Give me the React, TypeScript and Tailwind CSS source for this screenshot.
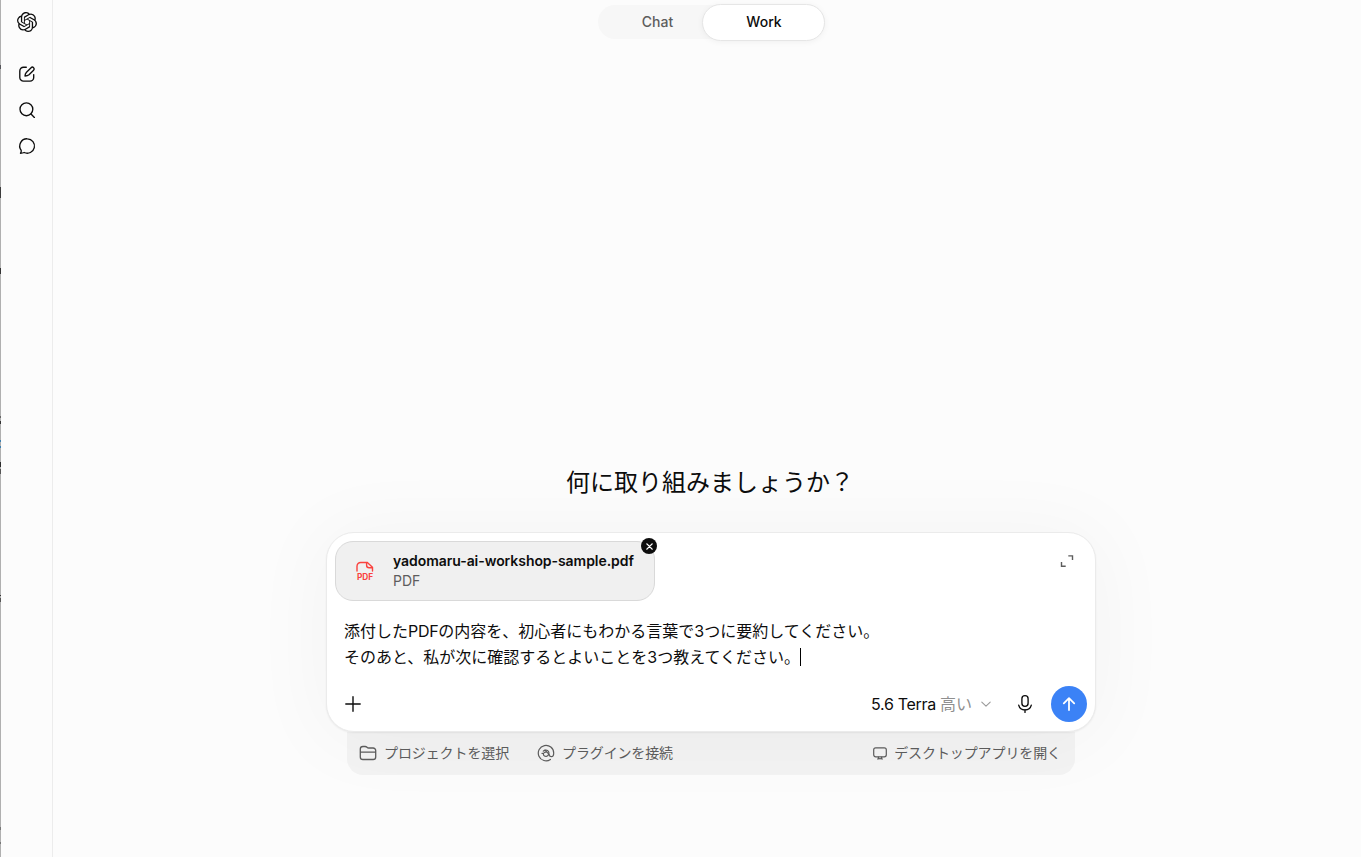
import type { ReactNode } from 'react'
import { SiOpenai } from 'react-icons/si'

type IconProps = { className?: string; children: ReactNode; box?: string; stroke?: number }

function Icon({ className, children, box = '0 0 20 20', stroke = 1.35 }: IconProps) {
  return (
    <svg
      viewBox={box}
      className={className}
      fill="none"
      stroke="currentColor"
      strokeWidth={stroke}
      strokeLinecap="round"
      strokeLinejoin="round"
    >
      {children}
    </svg>
  )
}

// slivers of the window behind, visible along the left edge
const slivers = [
  { top: 65, height: 4, color: '#55555a' },
  { top: 187, height: 11, color: '#3c3c3c' },
  { top: 268, height: 6, color: '#333333' },
  { top: 416, height: 2, color: '#666666' },
  { top: 421, height: 3, color: '#333333' },
  { top: 440, height: 2, color: '#3d7fae' },
  { top: 446, height: 2, color: '#3d7fae' },
  { top: 462, height: 5, color: '#2c2c2c' },
  { top: 469, height: 5, color: '#555555' },
  { top: 595, height: 1, color: '#333333' },
  { top: 598, height: 4, color: '#555555' },
  { top: 827, height: 3, color: '#777777' },
  { top: 842, height: 2, color: '#777777' },
]

function Sidebar() {
  return (
    <aside className="flex w-[53px] shrink-0 border-r border-[#ececec]">
      <div className="relative w-px shrink-0 bg-[#b0b0b0]">
        {slivers.map(s => (
          <span key={s.top} className="absolute left-0 w-px" style={{ top: s.top, height: s.height, background: s.color }} />
        ))}
      </div>
      <nav className="flex flex-1 flex-col items-center pt-3">
        <button className="size-5">
          <SiOpenai className="size-5" />
        </button>
        <button className="mt-8 size-5">
          <Icon className="size-5">
            <path d="M9.3 3.2H6.5A3.7 3.7 0 0 0 2.8 6.9v6.5a3.7 3.7 0 0 0 3.7 3.7H13a3.7 3.7 0 0 0 3.7-3.7v-2.8" />
            <path d="M8 12c0-1.8.5-2.7 1.5-3.7l4.6-4.6a1.75 1.75 0 0 1 2.5 2.5L12 10.7C11 11.6 9.9 12 8 12z" />
          </Icon>
        </button>
        <button className="mt-4 size-5">
          <Icon className="size-5">
            <circle cx="9.4" cy="9.3" r="6.4" />
            <path d="M14 14l3.4 3.4" />
          </Icon>
        </button>
        <button className="mt-4 size-5">
          <Icon className="size-5">
            <path d="M10.4 2.8a7.2 7.2 0 1 1-3.2 13.7c-1.2.5-2.4.7-3.7.7.6-.8.9-1.8.7-2.9A7.2 7.2 0 0 1 10.4 2.8z" />
          </Icon>
        </button>
      </nav>
    </aside>
  )
}

function ModeSwitch() {
  return (
    <div className="mt-1 flex h-[37px] w-[227px] items-center text-sm font-medium">
      <div className="-mt-px flex h-[34px] flex-1 items-center rounded-full bg-[#f7f7f7]">
        <button className="w-[104px] pl-4 text-center text-[#5d5d5d]">Chat</button>
        <button className="mt-px h-[37px] w-[123px] rounded-full border border-[#e6e6e6] bg-white pb-px pl-0.5 text-[#0d0d0d] shadow-[0_1px_6px_rgba(0,0,0,0.05)]">
          Work
        </button>
      </div>
    </div>
  )
}

function Attachment() {
  return (
    <div className="relative flex h-[60px] w-[320px] items-center rounded-[18px] border border-[#d9d9d9] bg-[#f0f0f0]">
      <svg viewBox="0 0 20 24" className="ml-[19px] h-6 w-5 text-[#fa423e]" fill="none" stroke="currentColor" strokeWidth="1.4">
        <path d="M2 12V7.2A3.7 3.7 0 0 1 5.7 3.5h6.6l5.2 4.8V12" strokeLinecap="round" />
        <path d="M11.6 3.6V6.2c0 1.6.9 2.5 2.5 2.5h3.3" />
        <text x="10" y="21" textAnchor="middle" fill="currentColor" stroke="none" className="font-['Inter'] text-[8.3px] font-bold">
          PDF
        </text>
      </svg>
      <div className="ml-[18px] text-sm leading-5">
        <p className="tracking-[-0.06px] text-[#0d0d0d] font-semibold">yadomaru-ai-workshop-sample.pdf</p>
        <p className="text-[#5d5d5d]">PDF</p>
      </div>
      <button className="absolute -top-[4px] -right-[3px] flex size-4 items-center justify-center rounded-full bg-[#0d0d0d] text-white">
        <Icon className="size-[7px]" box="0 0 8 8" stroke={1.6}>
          <path d="M1 1l6 6M7 1L1 7" />
        </Icon>
      </button>
    </div>
  )
}

function Composer() {
  return (
    <div className="relative flex h-[200px] w-[770px] flex-col rounded-[28px] border border-[#ebebeb] bg-white p-2 shadow-[0_4px_80px_8px_rgba(0,0,0,0.035),0_1px_2px_rgba(0,0,0,0.06)]">
      <div className="flex items-start justify-between">
        <Attachment />
        <button className="mt-3 mr-3 size-4 text-[#5d5d5d]">
          <svg viewBox="0 0 16 16" className="size-4" fill="none" stroke="currentColor" strokeWidth="1.4">
            <path d="M9.3 2.9h4.2v4.2M6.7 13.3H2.5V9.1" />
          </svg>
        </button>
      </div>
      <div className="mt-[17px] ml-[9px] text-base leading-[26px] whitespace-nowrap text-[#0d0d0d]">
        <p>
          添付した<span className="tracking-[-0.3px]">PDF</span>の内容を、初心者にもわかる言葉で3つに要約してください。
        </p>
        <p className="flex items-center">
          そのあと、私が次に確認するとよいことを3つ教えてください。
          <span className="h-[18px] w-px bg-black" />
        </p>
      </div>
      <div className="mt-4 flex h-9 items-center text-[#0d0d0d]">
        <button className="ml-2 size-5">
          <Icon className="size-5" stroke={1.4}>
            <path d="M10 2.8v14.4M2.8 10h14.4" />
          </Icon>
        </button>
        <button className="ml-auto flex items-center text-base">
          <span className="tracking-[-0.3px]">5.6 Terra</span>
          <span className="ml-1 text-[#8f8f8f]">高い</span>
          <Icon className="ml-2 size-3 text-[#9b9b9b]" box="0 0 12 12" stroke={1.1}>
            <path d="M1.8 4.2L6 8.2l4.2-4" />
          </Icon>
        </button>
        <button className="ml-[23px] size-5">
          <Icon className="size-5">
            <rect x="6.9" y="1.6" width="6.2" height="10.8" rx="3.1" />
            <path d="M3.7 11.1a6.5 6.5 0 0 0 12.6 0M10 15.6v2.8" />
          </Icon>
        </button>
        <button className="ml-4 flex size-9 items-center justify-center rounded-full bg-[#3b82f6] text-white">
          <Icon className="size-5" stroke={1.8}>
            <path d="M10 16V4.6M4.8 9.4L10 4.2l5.2 5.2" />
          </Icon>
        </button>
      </div>
    </div>
  )
}

function Tray() {
  return (
    <div className="flex h-[43px] w-[728px] items-center rounded-b-[16px] bg-[#f3f3f3] px-3 pb-px text-sm text-[#5d5d5d]">
      <button className="flex items-center">
        <Icon className="size-[18px]" box="0 0 18 18" stroke={1.3}>
          <path d="M1.3 5.1a2.6 2.6 0 0 1 2.6-2.6h2.2c.8 0 1.4.3 1.9.8.5.5.9.7 1.6.7h4.5a2.6 2.6 0 0 1 2.6 2.6v6.3a2.6 2.6 0 0 1-2.6 2.6H3.9a2.6 2.6 0 0 1-2.6-2.6zM1.3 8.1h15.4" />
        </Icon>
        <span className="ml-[7px] tracking-[-0.1px]">プロジェクトを選択</span>
      </button>
      <button className="ml-7 flex items-center">
        <Icon className="size-[18px]" box="0 0 18 18" stroke={1.2}>
          <path d="M13.4 15.4A7.7 7.7 0 1 1 16.7 9c0 2.3-.8 3.7-2.3 3.7-1.3 0-2-.8-2.2-2.1" />
          <path d="M6.3 7.2c1.5-1.7 4.2-1.5 5.2.3 1 1.8.2 4.1-1.7 4.7-1.7.5-3.4-.5-3.4-2 0-1.3 1.2-2.2 2.6-2" />
          <path d="M8 6.2l3.8 3.9M5 9.3l1.5.2" />
        </Icon>
        <span className="ml-[7px] tracking-[-0.15px]">プラグインを接続</span>
      </button>
      <button className="ml-auto mr-0.5 flex items-center">
        <Icon className="size-4" box="0 0 16 16" stroke={1.2}>
          <rect x="1.7" y="2.8" width="12.6" height="9" rx="2" />
          <path d="M5.6 14c1.5-.5 3.3-.5 4.8 0M6.4 12v1.6M9.6 12v1.6" />
        </Icon>
        <span className="ml-1.5 tracking-[-0.1px]">デスクトップアプリを開く</span>
      </button>
    </div>
  )
}

export default function App() {
  return (
    <div className="flex h-[857px] w-[1361px] overflow-hidden bg-[#fcfcfc] font-['Inter','Noto_Sans_CJK_JP',sans-serif] text-[#0d0d0d]">
      <Sidebar />
      <main className="flex flex-1 flex-col items-center pl-2">
        <ModeSwitch />
        <h1 className="mt-[424px] pr-0.5 text-2xl leading-9">何に取り組みましょうか？</h1>
        <div className="mt-[31px] flex flex-col items-center">
          <Composer />
          <Tray />
        </div>
      </main>
    </div>
  )
}
